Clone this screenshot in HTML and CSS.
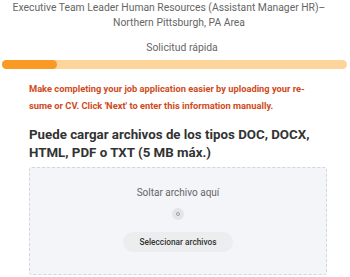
FILE: index.html
```html
<!DOCTYPE html>
<html lang="en">
<head>
    <meta charset="UTF-8">
    <meta name="viewport" content="width=device-width, initial-scale=1.0">
    <title>Solicitud rápida</title>
    <link rel="stylesheet" href="styles.css">
</head>
<body>
    <div class="apply-page">
        <div class="job-title">
            <span class="title-line first">Executive Team Leader Human Resources (Assistant Manager HR)–</span>
            <span class="title-line">Northern Pittsburgh, PA Area</span>
        </div>
        <div class="step-name">Solicitud rápida</div>
        <div class="progress-track">
            <div class="progress-fill" style="width: 16%;"></div>
        </div>

        <div class="content">
            <p class="notice">Make completing your job application easier by uploading your re&shy;sume or CV. Click 'Next' to enter this information manually.</p>
            <h2 class="upload-heading">Puede cargar archivos de los tipos DOC, DOCX, HTML, PDF o TXT (5 MB máx.)</h2>

            <div class="drop-zone">
                <div class="drop-text">Soltar archivo aquí</div>
                <div class="drop-dot"><span></span></div>
                <button class="select-button">Seleccionar archivos</button>
            </div>
        </div>
    </div>
</body>
</html>
```

FILE: styles.css
```css
body {
    font-family: Roboto, "Liberation Sans", Arial, sans-serif;
    margin: 0;
    padding: 0;
    background-color: #ffffff;
    color: #333333;
    overflow: hidden;
}

.apply-page {
    display: flex;
    flex-direction: column;
}

.job-title {
    font-size: 10.35px;
    line-height: 15px;
    color: #666666;
    text-align: center;
    padding-left: 8px;
}

.title-line {
    display: block;
    white-space: nowrap;
}

.title-line.first {
    padding-right: 20px;
}

.step-name {
    margin-top: 10px;
    font-size: 10.4px;
    line-height: 15px;
    color: #666666;
    text-align: center;
    padding-left: 14px;
}

/* Progress */
.progress-track {
    margin: 5px 3px 0 2px;
    height: 9px;
    border-radius: 5px;
    background: #fdd49a;
}

.progress-fill {
    height: 100%;
    border-radius: 5px;
    background: #f99a25;
}

.content {
    padding: 0 23px 0 29px;
}

.notice {
    margin: 12px 0 0;
    max-width: 292px;
    font-size: 9.3px;
    line-height: 16.5px;
    font-weight: bold;
    color: #d04a1b;
    hyphens: manual;
}

.upload-heading {
    margin: 12px 0 0;
    font-size: 13.3px;
    line-height: 18px;
    font-weight: bold;
    color: #333333;
}

.drop-zone {
    margin-top: 5px;
    height: 106px;
    background: #f3f5f8;
    border: 1px dashed #d4d7da;
    border-radius: 3px;
    display: flex;
    flex-direction: column;
    align-items: center;
}

.drop-text {
    margin-top: 19px;
    font-size: 10px;
    line-height: 12px;
    color: #666666;
}

.drop-dot {
    margin-top: 9px;
    width: 12px;
    height: 12px;
    border-radius: 50%;
    background: #e3e5e8;
    display: flex;
    align-items: center;
    justify-content: center;
}

.drop-dot span {
    width: 2px;
    height: 2px;
    border-radius: 50%;
    border: 1px solid #9aa0a6;
}

.select-button {
    margin-top: 12px;
    padding: 0 16px;
    height: 20px;
    border: none;
    border-radius: 10px;
    background: #ebedef;
    font-family: Roboto, "Liberation Sans", Arial, sans-serif;
    font-size: 8.3px;
    font-weight: 500;
    color: #333333;
}
```
